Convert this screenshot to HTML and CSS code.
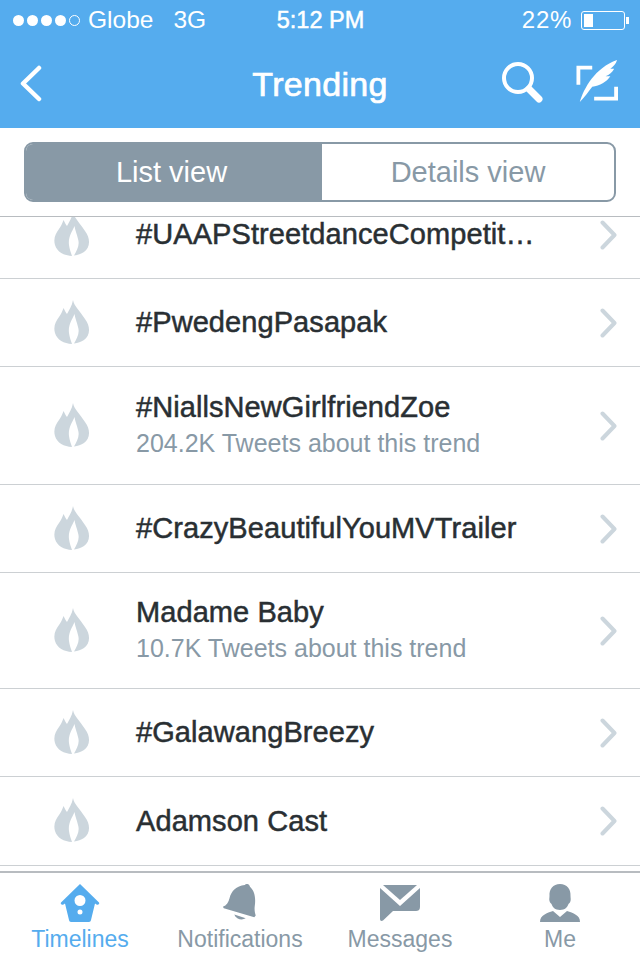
FILE: index.html
```html
<!DOCTYPE html>
<html lang="en">

<head>
    <meta charset="UTF-8">
    <meta name="viewport" content="width=device-width, initial-scale=1.0">
    <title>Trending</title>
    <link rel="stylesheet" href="styles.css">
</head>

<body>
    <svg width="0" height="0" class="defs">
        <symbol id="flame" viewBox="0 0 36 44">
            <path d="M19 0C20 6 26 11 31 19C37 27 36 36 30 40C27 42 24 43 20 43.5C23 38 26 33 24 27C23 22 21 18 20.5 14C18 20 14 25 15 33C15.500 37 17 41 18 44C10 43.500 3 40 1 33C-1 26 2 21 5 17C7 14 8 12 9.500 8C11 11 12 13 13 14C15 10 18 6 19 0Z" />
        </symbol>
        <symbol id="chevron" viewBox="0 0 18 30">
            <path d="M2.500 2.500L14.500 15L2.500 27.500" fill="none" stroke-width="4" stroke-linecap="round" stroke-linejoin="round" />
        </symbol>
    </svg>
    <div class="app">
        <header class="top">
            <div class="status">
                <div class="carrier">
                    <span class="dots"><i></i><i></i><i></i><i></i><i class="empty"></i></span>
                    <span>Globe</span>
                    <span class="network">3G</span>
                </div>
                <div class="clock">5:12 PM</div>
                <div class="power">
                    <span class="percent">22%</span>
                    <span class="battery"><i></i></span>
                </div>
            </div>
            <nav class="navbar">
                <svg class="back" width="24" height="38" viewBox="0 0 24 38">
                    <path d="M21 3L5 18.500L21 34" fill="none" stroke="#fff" stroke-width="4.500" stroke-linecap="round" stroke-linejoin="round" />
                </svg>
                <h1>Trending</h1>
                <div class="actions">
                    <svg width="42" height="44" viewBox="0 0 42 44">
                        <circle cx="16" cy="16" r="14" fill="none" stroke="#fff" stroke-width="4" />
                        <path d="M27 27L37 37" stroke="#fff" stroke-width="7" stroke-linecap="round" />
                    </svg>
                    <svg class="compose" width="42" height="44" viewBox="0 0 44 46">
                        <path d="M17 8H2.500V26M42 28V40.500H19" fill="none" stroke="#fff" stroke-width="4" />
                        <path d="M4 44C8 30 20 8 43 0C42 4 39 7 36 9L40 9C38 13 35 15 31 17L36 17C32 23 25 27 17 28C13 33 9 39 4 44Z" fill="#fff" />
                    </svg>
                </div>
            </nav>
        </header>

        <div class="toggle-wrap">
            <div class="toggle">
                <div class="toggle-btn active">List view</div>
                <div class="toggle-btn">Details view</div>
            </div>
        </div>

        <main class="list">
            <div class="trend cut">
                <svg class="flame"><use href="#flame" /></svg>
                <div class="trend-text"><div class="trend-name">#UAAPStreetdanceCompetit…</div></div>
                <svg class="chevron"><use href="#chevron" /></svg>
            </div>
            <div class="trend">
                <svg class="flame"><use href="#flame" /></svg>
                <div class="trend-text"><div class="trend-name">#PwedengPasapak</div></div>
                <svg class="chevron"><use href="#chevron" /></svg>
            </div>
            <div class="trend tall">
                <svg class="flame"><use href="#flame" /></svg>
                <div class="trend-text">
                    <div class="trend-name">#NiallsNewGirlfriendZoe</div>
                    <div class="trend-sub">204.2K Tweets about this trend</div>
                </div>
                <svg class="chevron"><use href="#chevron" /></svg>
            </div>
            <div class="trend">
                <svg class="flame"><use href="#flame" /></svg>
                <div class="trend-text"><div class="trend-name">#CrazyBeautifulYouMVTrailer</div></div>
                <svg class="chevron"><use href="#chevron" /></svg>
            </div>
            <div class="trend tall baby">
                <svg class="flame"><use href="#flame" /></svg>
                <div class="trend-text">
                    <div class="trend-name">Madame Baby</div>
                    <div class="trend-sub">10.7K Tweets about this trend</div>
                </div>
                <svg class="chevron"><use href="#chevron" /></svg>
            </div>
            <div class="trend">
                <svg class="flame"><use href="#flame" /></svg>
                <div class="trend-text"><div class="trend-name">#GalawangBreezy</div></div>
                <svg class="chevron"><use href="#chevron" /></svg>
            </div>
            <div class="trend last">
                <svg class="flame"><use href="#flame" /></svg>
                <div class="trend-text"><div class="trend-name">Adamson Cast</div></div>
                <svg class="chevron"><use href="#chevron" /></svg>
            </div>
        </main>

        <footer class="tabs">
            <div class="tab current">
                <svg width="40" height="40" viewBox="0 0 40 40">
                    <path fill-rule="evenodd" d="M20 0L39 18.500C40 20 38 21.500 36.500 20.500L35 19.500L31 36C30.800 37 30 38 29 38H11C10 38 9.200 37 9 36L5 19.500L3.500 20.500C2 21.500 0 20 1 18.500ZM20 11A5.500 5.500 0 1 0 20 22A5.500 5.500 0 1 0 20 11ZM20 25.500A2.500 2.500 0 1 0 20 30.500A2.500 2.500 0 1 0 20 25.500Z" />
                </svg>
                <span>Timelines</span>
            </div>
            <div class="tab">
                <svg width="40" height="42" viewBox="0 0 40 42">
                    <path d="M25 1C27 -1 30 0 30.500 3C36 8 36.500 16 35.500 23C35 27 35.500 30 36.500 33L35 35L3 25.500L2 24C6 22.500 8 19 9 15C11 7 16 2 25 1Z" />
                    <path d="M14 32L26 36C22 38.500 16 37 14 32Z" />
                </svg>
                <span>Notifications</span>
            </div>
            <div class="tab">
                <svg width="40" height="38" viewBox="0 0 40 38">
                    <path d="M3 0H37L20 15Z" />
                    <path d="M0 3L20 21L40 3V22C40 25 38 26 36 26H13L3 35.500C1.500 36.500 0 36 0 34Z" />
                </svg>
                <span>Messages</span>
            </div>
            <div class="tab">
                <svg width="40" height="40" viewBox="0 0 40 40">
                    <path d="M20 0C27 0 31 5 30.500 12C30.500 14 31 15 30.500 17C30 19 29 19 28.500 20C27.500 23 25 26 20 26C15 26 12.500 23 11.500 20C11 19 10 19 9.500 17C9 15 9.500 14 9.500 12C9 5 13 0 20 0Z" />
                    <path d="M13 27L20 33L27 27C33 29 40 31 40 38H0C0 31 7 29 13 27Z" />
                </svg>
                <span>Me</span>
            </div>
        </footer>
    </div>
</body>

</html>
```

FILE: styles.css
```css
html,
body {
    margin: 0;
    padding: 0;
}

body {
    font-family: "Liberation Sans", Arial, sans-serif;
    background-color: #fff;
    color: #292f33;
}

.defs {
    display: block;
    height: 0;
}

.app {
    width: 640px;
    height: 960px;
    display: flex;
    flex-direction: column;
    overflow: hidden;
}

.top {
    background-color: #55acee;
    color: #fff;
    height: 128px;
    flex-shrink: 0;
}

.status {
    height: 40px;
    display: grid;
    grid-template-columns: 1fr auto 1fr;
    align-items: center;
    padding: 0 12px 0 13px;
    font-size: 24.5px;
}

.carrier {
    display: flex;
    align-items: center;
}

.dots {
    display: flex;
    gap: 3px;
    margin-right: 8px;
}

.dots i {
    width: 11px;
    height: 11px;
    border-radius: 50%;
    background-color: #fff;
    box-sizing: border-box;
}

.dots i.empty {
    background: none;
    border: 1px solid #fff;
}

.network {
    margin-left: 20px;
}

.clock {
    font-size: 23.5px;
    -webkit-text-stroke: 0.5px #fff;
}

.power {
    display: flex;
    align-items: center;
    justify-content: flex-end;
    gap: 9px;
}

.percent {
    font-size: 24px;
    letter-spacing: 0.7px;
}

.battery {
    position: relative;
    width: 44px;
    height: 19px;
    border: 1px solid #fff;
    border-radius: 3px;
    box-sizing: border-box;
    margin-right: 3px;
    padding: 2px;
}

.battery i {
    display: block;
    width: 9px;
    height: 100%;
    background-color: #fff;
}

.battery::after {
    content: "";
    position: absolute;
    right: -5px;
    top: 5px;
    width: 3px;
    height: 7px;
    background-color: #fff;
}

.navbar {
    height: 88px;
    display: flex;
    align-items: center;
    justify-content: space-between;
    padding: 0 22px 0 18px;
    position: relative;
    box-sizing: border-box;
}

.navbar h1 {
    position: absolute;
    left: 0;
    right: 0;
    margin: 0;
    text-align: center;
    font-size: 34px;
    font-weight: 400;
    letter-spacing: 0.3px;
    -webkit-text-stroke: 0.7px #fff;
}

.actions {
    display: flex;
    align-items: center;
    gap: 32px;
}

.compose {
    margin-bottom: 4px;
}

.toggle-wrap {
    height: 89px;
    box-sizing: border-box;
    padding: 14px 24px;
    border-bottom: 1px solid #b8bcc0;
    flex-shrink: 0;
}

.toggle {
    display: flex;
    height: 60px;
    border: 2px solid #8899a6;
    border-radius: 9px;
    box-sizing: border-box;
    overflow: hidden;
}

.toggle-btn {
    flex: 1;
    display: flex;
    align-items: center;
    justify-content: center;
    font-size: 29px;
    color: #8899a6;
}

.toggle-btn.active {
    flex: 0 0 296px;
    box-sizing: border-box;
    padding-right: 5px;
    background-color: #8899a6;
    color: #fff;
}

.list {
    flex: 1;
    overflow: hidden;
    min-height: 0;
}

.trend {
    height: 88px;
    box-sizing: border-box;
    display: flex;
    align-items: center;
    padding: 0 22px 0 54px;
    border-bottom: 1px solid #ccd0d3;
}

.trend.cut {
    margin-top: -26px;
}

.trend.tall {
    height: 118px;
}

.trend.baby {
    height: 116px;
}

.trend.last {
    height: 89px;
}

.flame {
    width: 36px;
    height: 44px;
    fill: #ccd6dd;
    flex-shrink: 0;
    margin-bottom: 2px;
}

.trend-text {
    flex: 1;
    margin-left: 46px;
    min-width: 0;
}

.tall .trend-text {
    padding-bottom: 3px;
}

.trend-name {
    font-size: 29px;
    letter-spacing: 0.08px;
    -webkit-text-stroke: 0.5px #292f33;
    white-space: nowrap;
}

.trend-sub {
    font-size: 25px;
    color: #8899a6;
    margin-top: 5px;
    white-space: nowrap;
}

.chevron {
    width: 18px;
    height: 30px;
    stroke: #ccd6dd;
    flex-shrink: 0;
}

.tabs {
    height: 89px;
    flex-shrink: 0;
    box-sizing: border-box;
    border-top: 2px solid #b8bcc0;
    display: grid;
    grid-template-columns: repeat(4, 1fr);
    background-color: #fff;
}

.tab {
    display: flex;
    flex-direction: column;
    align-items: center;
    padding-top: 11px;
    font-size: 23px;
    color: #8899a6;
    fill: #8899a6;
}

.tab svg {
    height: 40px;
    flex-shrink: 0;
}

.tab span {
    margin-top: 2px;
}

.tab.current {
    color: #55acee;
    fill: #55acee;
}
```
